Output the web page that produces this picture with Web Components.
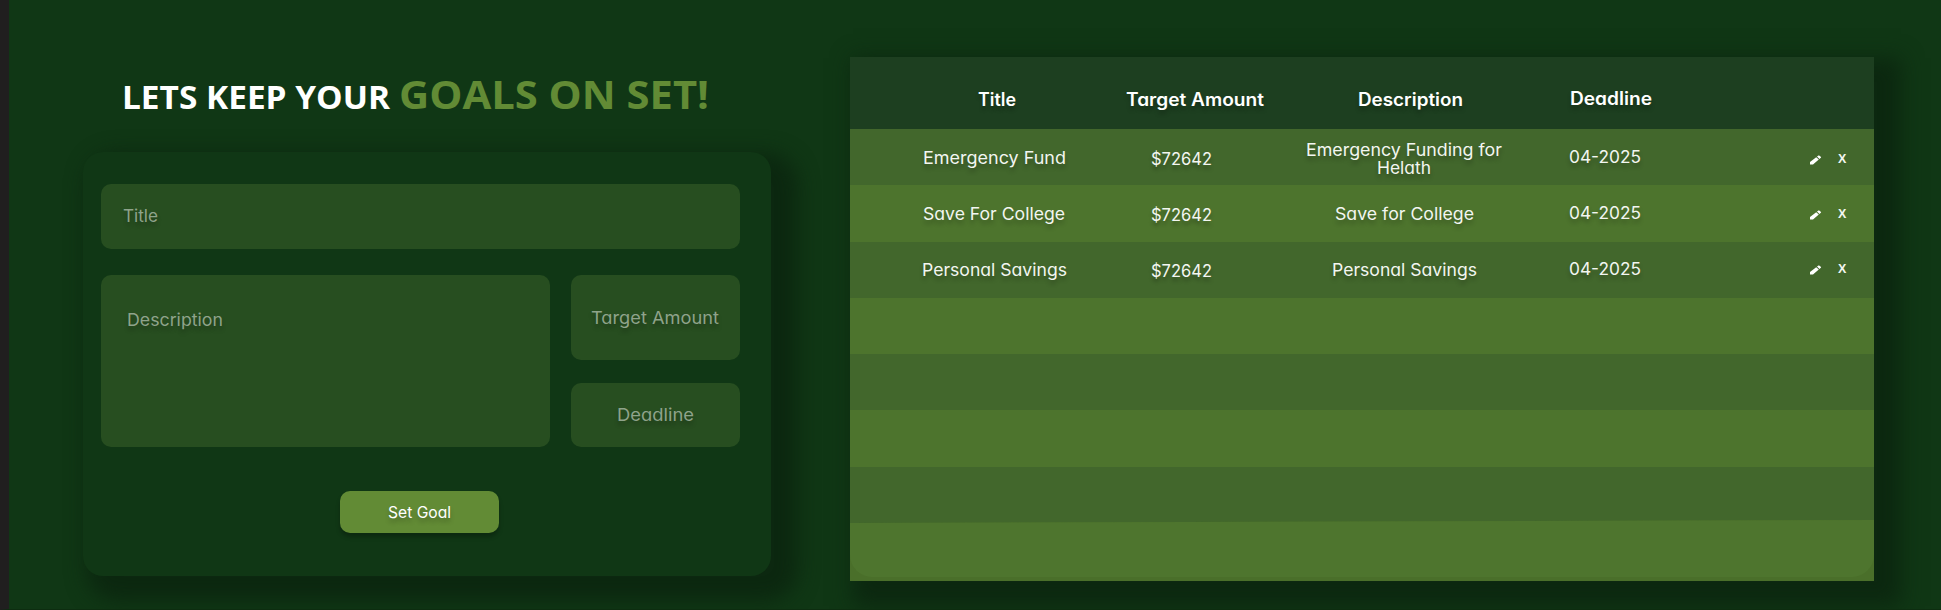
<!DOCTYPE html>
<html lang="en">
<head>
<meta charset="utf-8">
<title>Goals</title>
<style>
html,body{margin:0;height:100%;background:#103715}
body{font-family:Inter,"Open Sans",sans-serif;font-feature-settings:"cv11" 1;color:#fff;overflow:hidden}
</style>
</head>
<body>
<goals-page></goals-page>
<script>
const define = (name, html, setup) => customElements.define(name, class extends HTMLElement {
  constructor() {
    super();
    this.attachShadow({ mode: "open" }).innerHTML = html;
  }
  connectedCallback() { if (setup) setup(this); }
});

// Text whose glyphs are widened or narrowed so that it fills the given width.
define("fit-text", `<style>
:host{display:block;white-space:nowrap;line-height:20px}
span{display:inline-block;transform-origin:0 50%}
</style><span><slot></slot></span>`, el => {
  const span = el.shadowRoot.querySelector("span");
  const target = parseFloat(el.getAttribute("width"));
  el.style.width = target + "px";
  span.style.transform = `scaleX(${target / span.getBoundingClientRect().width})`;
});

define("goal-heading", `<style>
:host{display:flex;align-items:baseline;gap:9px;margin-left:39px;height:60px;font-family:"Open Sans",sans-serif;font-weight:700}
fit-text{line-height:60px;font-size:32px}
.accent{font-size:40px;color:#628b35}
</style><fit-text width="268">LETS KEEP YOUR</fit-text><fit-text class="accent" width="310">GOALS ON SET!</fit-text>`);

define("goal-field", `<style>
:host{display:flex;box-sizing:border-box;background:#274e20;border-radius:10px;color:#8fa38b;font-size:17px;text-shadow:0 4px 4px rgba(0,0,0,.25)}
</style><slot></slot>`);

define("goal-button", `<style>
:host{display:block}
button{all:unset;display:flex;justify-content:center;box-sizing:border-box;width:159px;height:42px;padding-top:12px;border-radius:10px;background:#628b35;color:#fff;font-size:15.5px;box-shadow:0 4px 4px rgba(0,0,0,.25);text-shadow:0 4px 4px rgba(0,0,0,.25)}
</style><button><slot></slot></button>`);

define("goal-form", `<style>
:host{display:grid;box-sizing:border-box;width:688px;height:424px;padding:32px 31px 0 18px;grid-template-columns:449px 169px;grid-template-rows:65px 85px 64px 42px;column-gap:21px;row-gap:0;border-radius:20px;background:#103715;box-shadow:15px 13px 20px 12px #0c2810}
.title{grid-column:1/3;padding:22px 0 0 22px}
.desc{grid-row:2/4;margin-top:26px;height:172px;padding:35px 0 0 26px}
.amount{margin-top:26px;height:85px;padding:33px 0 0 20px}
.date{margin-top:49px;height:64px;padding:22px 0 0 46px}
.amount,.date{grid-column:2}
goal-button{grid-column:1/3;margin:93px 0 0 239px}
</style>
<goal-field class="title"><fit-text width="35">Title</fit-text></goal-field>
<goal-field class="desc"><fit-text width="96">Description</fit-text></goal-field>
<goal-field class="amount"><fit-text width="128">Target Amount</fit-text></goal-field>
<goal-field class="date"><fit-text width="77">Deadline</fit-text></goal-field>
<goal-button><fit-text width="63">Set Goal</fit-text></goal-button>`);

define("pencil-icon", `<style>:host{display:block;width:12px;height:10px}svg{display:block}</style>
<svg width="12" height="10" viewBox="0 0 12 10" fill="#fff"><path d="M0 9.5V7L6.2 2.2L8.8 4.5L3 9.5ZM7 1.6L8.4.6Q9 .2 9.6.7L11 2Q11.3 2.4 10.8 2.8L9.5 3.9Z"/></svg>`);

define("goal-row", `<style>
:host{display:grid;text-shadow:0 4px 4px rgba(0,0,0,.25)}
</style><slot></slot>`);

define("row-actions", `<style>
:host{display:flex;gap:16px;justify-self:start;text-shadow:none}
b{font:700 12.5px/9px "Liberation Sans",sans-serif}
</style><pencil-icon></pencil-icon><b>X</b>`);

define("goal-table", `<style>
:host{display:block;width:1024px;height:524px;background:#4a6f2a;box-shadow:15px 13px 20px 12px #0c2810}
goal-row{box-sizing:border-box;grid-template-columns:287px 150px 239px 284px 64px;background:#42672c;height:56.3px;color:#f3f6f1;font-size:17px}
goal-row:nth-of-type(odd){background:#4d742d}
goal-row.head{background:#1d3f20;height:72px;font-weight:600;font-size:18px;color:#fff}
.center{justify-self:center}
.left{justify-self:start}
.desc{display:flex;flex-direction:column;align-items:center;margin-left:-5px}
.last{background:#4a6f2a;height:59px;margin-top:-3px;clip-path:polygon(0 3px,100% 0,100% 100%,0 100%)}
.last div{background:#4e752e;height:57px;border-radius:0 0 22px 22px}
</style><div id="rows"></div>`, el => {
  const t = (cls, w, s, top, left) => `<fit-text class="${cls}" width="${w}" style="margin:${top}px 0 0 ${left}px">${s}</fit-text>`;
  const data = [["Emergency Fund", 143, null, 0], ["Save For College", 142, "Save for College", 139], ["Personal Savings", 145, "Personal Savings", 145]];
  let html = `<goal-row class="head">${t("left", 38, "Title", 33, 128)}${t("left", 138, "Target Amount", 33, -11)}${t("left", 105, "Description", 33, 71)}${t("left", 82, "Deadline", 32, 44)}</goal-row>`;
  data.forEach(([name, w, desc, dw], i) => {
    const d = desc
      ? t("", dw, desc, 19 - i * .5, 0)
      : t("", 196, "Emergency Funding for", 11, 0) + t("", 54, "Helath", -2, 0);
    html += `<goal-row>${t("center", w, name, 19 - i * .5, 1)}${t("left", 61, "$72642", 20 - i * .5, 14)}<div class="desc">${d}</div>${t("left", 72, "04-2025", 18 - i * .5, 43)}<row-actions style="margin-top:${26 - i * 1.3}px"></row-actions></goal-row>`;
  });
  html += "<goal-row></goal-row>".repeat(4) + `<div class="last"><div></div></div>`;
  el.shadowRoot.querySelector("#rows").innerHTML = html;
});

define("goals-page", `<style>
:host{display:flex;box-sizing:border-box;width:1941px;height:610px;border-left:9px solid #201f1f;border-bottom:1px solid #0d2d10;background:#103715;overflow:hidden}
.left{width:688px;margin:64px 79px 0 74px;flex:none}
goal-form{margin-top:28px}
goal-table{margin-top:57px;flex:none}
</style>
<section class="left"><goal-heading></goal-heading><goal-form></goal-form></section>
<goal-table></goal-table>`);
</script>
</body>
</html>
